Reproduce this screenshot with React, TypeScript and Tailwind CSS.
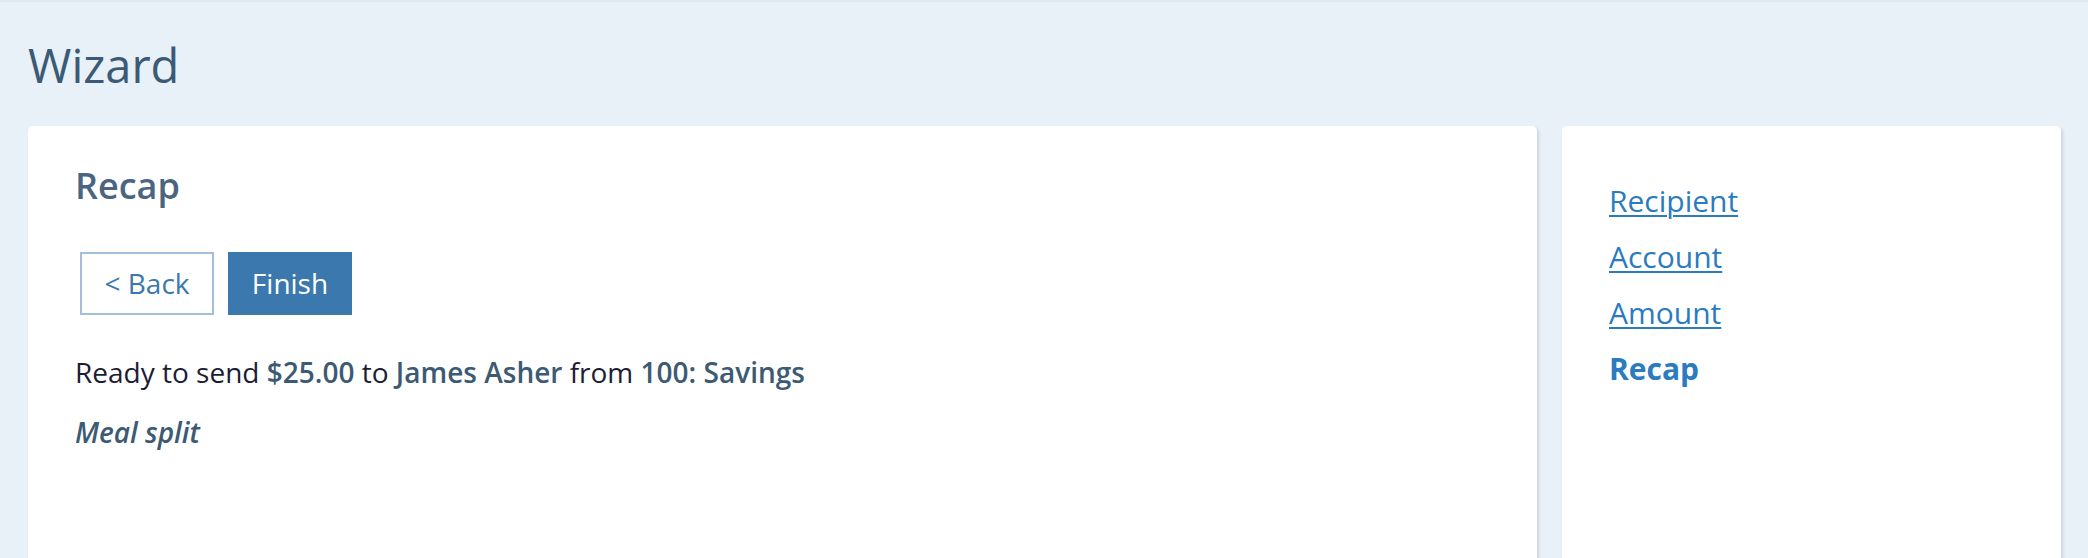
const steps = [
  { label: 'Recipient', done: true },
  { label: 'Account', done: true },
  { label: 'Amount', done: true },
  { label: 'Recap', done: false },
];

const WizardNav: React.FC = () => {
  return (
    <div className="w-[499px] shrink-0 h-[620px] bg-white rounded-[5px] shadow-[2px_2px_3px_rgba(40,60,90,0.14)] pl-[47px] pt-[47px]">
      {steps.map((step) =>
        step.done ? (
          <div key={step.label} className="h-[56px] leading-[56px]">
            <a href="#" className="text-[30px] text-[#2b7bbf] underline decoration-[2px] underline-offset-[3px]">
              {step.label}
            </a>
          </div>
        ) : (
          <div key={step.label} className="h-[56px] leading-[56px] text-[30px] font-bold text-[#2b7bbf]">
            {step.label}
          </div>
        )
      )}
    </div>
  );
};

const RecapCard: React.FC = () => {
  return (
    <div className="flex-1 h-[620px] bg-white rounded-[5px] shadow-[2px_2px_3px_rgba(40,60,90,0.14)] pl-[47px] pt-[33px]">
      <h2 className="text-[36px] font-semibold text-[#4b6580]">Recap</h2>
      <div className="flex gap-[14px] mt-[39px] ml-[5px]">
        <button className="h-[63px] w-[134px] flex items-center justify-center border-2 border-[#a3bfdc] text-[28px] text-[#3a78ad] bg-white">
          &lt; Back
        </button>
        <button className="h-[63px] w-[124px] flex items-center justify-center bg-[#3a78ad] text-[28px] text-white">
          Finish
        </button>
      </div>
      <p className="mt-[36px] text-[28px] text-[#1d1c35]">
        Ready to send <span className="font-semibold text-[#3d5a75]">$25.00</span> to{' '}
        <span className="font-semibold text-[#3d5a75]">James Asher</span> from{' '}
        <span className="font-semibold text-[#3d5a75]">100: Savings</span>
      </p>
      <p className="mt-[18px] text-[28px] italic font-semibold text-[#3d5a75]">Meal split</p>
    </div>
  );
};

export default function App() {
  return (
    <div className="h-[558px] overflow-hidden bg-[#e8f0f8] border-t-2 border-[#dfe7f0] font-['Open_Sans',sans-serif]">
      <h1 className="pl-[28px] pt-[28px] text-[47px] text-[#3b5a75]">Wizard</h1>
      <div className="flex gap-[25px] px-[27px] pl-[28px] mt-[25px]">
        <RecapCard />
        <WizardNav />
      </div>
    </div>
  );
}
